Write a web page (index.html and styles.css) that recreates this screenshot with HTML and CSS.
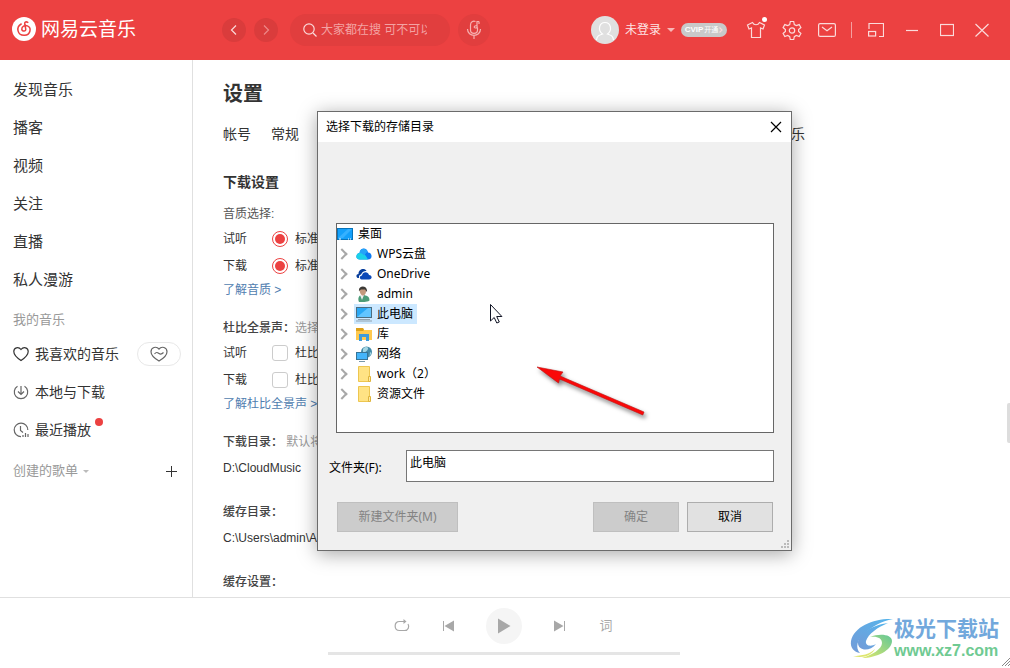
FILE: index.html
```html
<!DOCTYPE html>
<html lang="zh-CN">
<head>
<meta charset="utf-8">
<title>网易云音乐</title>
<link rel="stylesheet" href="styles.css">
</head>
<body>
<header class="topbar">
  <div class="brand">
    <svg class="brand-mark" viewBox="0 0 24 24" width="24" height="24"><circle cx="12" cy="12" r="12" fill="#fff"/><path d="M15.800 5.400c-1.500-1-3.200-.5-3.100 1.200l1 5.200c.6 2.800-3.800 3-3.900.3-.1-2.800 3-4.100 5.600-3.200 4.200 1.500 3.500 8.900-2.800 9.400-7.500.4-8.800-8.400-3.400-11.300" fill="none" stroke="#ec4141" stroke-width="1.500" stroke-linecap="round"/></svg>
    <span class="brand-name">网易云音乐</span>
  </div>
  <div class="history">
    <button class="round" aria-label="后退"><svg viewBox="0 0 24 24" width="24" height="24"><path d="M14 7.500l-4.500 4.500 4.500 4.500"/></svg></button>
    <button class="round dim" aria-label="前进"><svg viewBox="0 0 24 24" width="24" height="24"><path d="M10 7.500l4.500 4.500-4.500 4.500"/></svg></button>
  </div>
  <label class="search">
    <svg viewBox="0 0 14 14" width="14" height="14"><circle cx="6" cy="6" r="5.200"/><path d="M10 10l3.500 3.500"/></svg>
    <input type="text" placeholder="大家都在搜 可不可以" aria-label="搜索">
  </label>
  <button class="round mic" aria-label="听歌识曲"><svg viewBox="0 0 16 20" width="16" height="20"><path d="M9.500 1.500C7 .5 4.500 2 4.500 5v5c0 4.500 7 4.500 7 0V7.500M13 1.500h-2v4.500c-2.500-1-4 2-1.500 2s1.500-2 1.500-2M13 1.500V4M1.500 9c0 8.500 13 8.500 13 0M8 15.500v3.500"/></svg></button>
  <div class="account">
    <svg viewBox="0 0 28 28" width="28" height="28"><circle cx="14" cy="14" r="14" fill="#e0e0e0"/><path d="M5.500 24c.5-4.500 3-5 6-6-5-3.500-3.500-11.500 2.500-11.500s7.500 8 2.500 11.500c3 1 5.500 1.500 6 6" fill="none" stroke="#fff" stroke-width="1.200"/></svg>
    <button class="login">未登录<span class="caret"></span></button>
    <button class="vip"><b>CVIP</b><span>开通</span><svg viewBox="0 0 4 8" width="4" height="8"><path d="M.5 1.500l2.500 2.500-2.500 2.500"/></svg></button>
  </div>
  <div class="tools">
    <button class="skin" aria-label="皮肤"><svg viewBox="0 0 20 18" width="20" height="18"><path d="M6.500 1.500L1.500 4l1.500 4 2.500-1v9.500h9V7l2.500 1 1.500-4-5-2.500c-1.500 3-5.500 3-7 0z"/></svg></button>
    <button aria-label="设置"><svg viewBox="0 0 20 20" width="20" height="20"><path d="M8.300 1.500h3.400l.6 3 2 1.100 2.900-1 1.700 2.900-2.300 2v2l2.300 2-1.700 3-2.900-1-2 1.100-.6 2.900H8.300l-.6-2.900-2-1.100-2.900 1-1.700-3 2.300-2v-2l-2.300-2 1.700-2.900 2.900 1 2-1.100z"/><circle cx="10" cy="10.500" r="2.700"/></svg></button>
    <button aria-label="消息"><svg viewBox="0 0 18 14" width="18" height="14"><rect x=".6" y=".6" width="16.800" height="12.800" rx="1.500"/><path d="M4 4l5 3.800L14 4"/></svg></button>
    <span class="rule"></span>
    <button aria-label="迷你模式"><svg viewBox="0 0 16 14" width="16" height="14"><path d="M1 6V.5h14.500v13H11"/><rect x=".6" y="8.500" width="7" height="4.500"/></svg></button>
    <button class="win" aria-label="最小化"><svg viewBox="0 0 14 14" width="14" height="14"><path d="M1 7.500h12"/></svg></button>
    <button class="win" aria-label="最大化"><svg viewBox="0 0 14 14" width="14" height="14"><rect x=".5" y="1.500" width="13" height="11"/></svg></button>
    <button class="win" aria-label="关闭"><svg viewBox="0 0 14 14" width="14" height="14"><path d="M.5 1l13 12.500M13.500 1l-13 12.500"/></svg></button>
  </div>
</header>

<div class="body">
  <nav class="sidebar">
    <a href="#">发现音乐</a>
    <a href="#">播客</a>
    <a href="#">视频</a>
    <a href="#">关注</a>
    <a href="#">直播</a>
    <a href="#">私人漫游</a>
    <div class="group">我的音乐</div>
    <div class="mine">
      <a href="#"><svg viewBox="0 0 16 16" width="16" height="16"><path d="M8 14.500C5 12.500.8 9.500.8 5.500.8 1.500 5.500.3 8 3.500c2.500-3.200 7.200-2 7.200 2 0 4-4.200 7-7.200 9z"/></svg>我喜欢的音乐</a>
      <button class="heart-mode" aria-label="心动模式"><svg viewBox="0 0 18 16" width="18" height="16"><path d="M9 15C5.500 13 1 9.800 1 5.800 1 1.300 6.300-.2 9 3c2.700-3.200 8-1.700 8 2.800 0 4-4.500 7.200-8 9.200zM4.500 8c2-2.500 3-1.500 4.500-.5s2.500 1 4.500-1"/></svg></button>
    </div>
    <div class="mine"><a href="#"><svg class="soft" viewBox="0 0 16 16" width="16" height="16"><path d="M4.500 2.300a6.700 6.700 0 1 0 7 0M8 2v8M5 7.500l3 3 3-3"/></svg>本地与下载</a></div>
    <div class="mine"><a href="#"><svg class="soft" viewBox="0 0 16 16" width="16" height="16"><path d="M8 14.700A6.800 6.800 0 1 1 14.800 8M7.500 4v4.500L10 10.500M10 15v-2M12.500 15v-4M15 15v-3"/></svg>最近播放<i class="dot"></i></a></div>
    <div class="created"><button class="fold">创建的歌单<span class="caret"></span></button><button class="add" aria-label="新建歌单"><svg viewBox="0 0 11 11" width="11" height="11"><path d="M5.500 0v11M0 5.500h11"/></svg></button></div>
  </nav>

  <main class="settings">
    <h1>设置</h1>
    <div class="tabs"><a href="#">帐号</a><a href="#">常规</a><a href="#">乐</a></div>
    <h2>下载设置</h2>
    <section>
      <h3 class="plain">音质选择:</h3>
      <div class="option"><span>试听</span><label><input type="radio" name="listen" checked>标准</label></div>
      <div class="option"><span>下载</span><label><input type="radio" name="save" checked>标准</label></div>
      <a class="more" href="#">了解音质 &gt;</a>
    </section>
    <section>
      <h3>杜比全景声：<small>选择</small></h3>
      <div class="option"><span>试听</span><label><input type="checkbox">杜比</label></div>
      <div class="option"><span>下载</span><label><input type="checkbox">杜比</label></div>
      <a class="more" href="#">了解杜比全景声 &gt;</a>
    </section>
    <section>
      <h3>下载目录： <small>默认将</small></h3>
      <p class="path">D:\CloudMusic</p>
    </section>
    <section>
      <h3>缓存目录：</h3>
      <p class="path">C:\Users\admin\A</p>
    </section>
    <section>
      <h3>缓存设置：</h3>
    </section>
    <span class="thumb"></span>
  </main>
</div>

<footer class="player">
  <div class="controls">
    <button aria-label="循环"><svg viewBox="0 0 16 14" width="16" height="14"><path class="line" d="M10 2.500H5.500C-.3 2.500-.3 11.500 5.500 11.500h5c4 0 5-4 3.500-6.500"/><path d="M9.500 0l3 2.500-3 2.500z"/></svg></button>
    <button aria-label="上一首"><svg viewBox="0 0 16 14" width="16" height="14"><path d="M3 2h1v10H3zM14 1.500v11L4.500 7z"/></svg></button>
    <button class="play" aria-label="播放"><svg viewBox="0 0 14 16" width="14" height="16"><path d="M1 .5v15L13.500 8z"/></svg></button>
    <button aria-label="下一首"><svg viewBox="0 0 16 14" width="16" height="14"><path d="M12 2h1v10h-1zM2 1.500v11L11.500 7z"/></svg></button>
    <button class="lyric">词</button>
  </div>
  <div class="progress"></div>
</footer>

<div class="watermark">
  <svg viewBox="0 0 44 42" width="44" height="42">
    <defs><linearGradient id="sky" x1="1" y1="0" x2="0" y2="1"><stop offset="0" stop-color="#55b5ec"/><stop offset="1" stop-color="#739bd8"/></linearGradient><linearGradient id="leaf" x1="1" y1="0" x2="0" y2="1"><stop offset="0" stop-color="#61c797"/><stop offset="1" stop-color="#e3e86a"/></linearGradient></defs>
    <path fill="url(#sky)" d="M43 1C25 0 4 8 1 23c-1 7 3 11 9 12-5-5-3-14 5-20C22 9 31 3 43 1z"/>
    <path fill="url(#sky)" d="M38 5C22 7 8 16 8 25c0 8 12 9 18 1-5 3-11 2-10-3 2-7 12-14 22-18z"/>
    <path fill="url(#leaf)" d="M20 19c9-4 22-3 22 4 0 9-15 17-30 17 10-3 20-9 20-15 0-5-5-7-12-6z"/>
    <path fill="#dfe66d" d="M3 38c9 0 17-2 22-7-3 6-12 10-22 7z"/>
  </svg>
  <div class="site"><strong>极光下载站</strong><span>www.xz7.com</span></div>
</div>
<svg class="window-grip" viewBox="0 0 8 8" width="8" height="8"><path d="M0 8L8 0M3 8l5-5M6 8l2-2"/></svg>

<div class="dialog" role="dialog" aria-labelledby="dialog-title">
  <div class="titlebar"><span id="dialog-title">选择下载的存储目录</span><button aria-label="关闭"><svg viewBox="0 0 12 12" width="12" height="12"><path d="M1 1l10 10M11 1L1 11"/></svg></button></div>
  <div class="content">
    <ul class="tree">
      <li class="root"><svg viewBox="0 0 16 12" width="16" height="12"><rect x=".5" y=".5" width="15" height="11" fill="#14a0fa" stroke="#0873b8"/><path d="M1 10L11 1h4L6 10z" fill="#36b1ff"/><path d="M2 11h2m7 0h1m1 0h1" stroke="#fff"/></svg><span>桌面</span></li>
      <li><button class="expand" aria-label="展开"></button><svg viewBox="0 0 16 16" width="16" height="16"><path d="M4 13.500c-5 0-4.500-6-.5-6.500C4 1.500 11 1 12 6.500c4.500 0 5 7 0 7z" fill="#0c7bf2"/><path d="M4 13.500c-5 0-4.500-6-.5-6.500 4-1 6 2 8.500 6.500z" fill="#1bd1e8"/><path d="M3.500 7C4 2 10 1.500 11.500 5.500L8 9.500C7 8 5.500 7 3.500 7z" fill="#24a4f8"/></svg><span>WPS云盘</span></li>
      <li><button class="expand" aria-label="展开"></button><svg viewBox="0 0 16 16" width="16" height="16"><path d="M1.500 12C-.5 10.500.5 8 2.500 8c0-5 6-6.500 8-3C6.500 4.500 5.500 8 5 8.500 2.500 9 3 11 3 12z" fill="#083e9c"/><path d="M5.500 13.500c-2.500-.5-2-4 .5-4 .5-4 6-4.500 7-.5 3.500 0 3.500 4.500 0 4.500z" fill="#0b48b8"/></svg><span>OneDrive</span></li>
      <li><button class="expand" aria-label="展开"></button><svg viewBox="0 0 16 16" width="16" height="16"><path d="M3 16c-1-2-1-5 1-6.500l4-.5c4 1 5.500 2 5.500 5.500-3 2-7 1.500-10.500 1.500z" fill="#4c9c78"/><path d="M4 9l2 5 2-5z" fill="#eee"/><path d="M3.500 3h6.500c.5 4-1 6.500-3 6.500S3.500 7 3.500 3z" fill="#c49a7d"/><path d="M3 5C2-1 12-1 11 6L9 3.500H5z" fill="#3c3936"/></svg><span>admin</span></li>
      <li class="selected"><button class="expand" aria-label="展开"></button><svg viewBox="0 0 16 16" width="16" height="16"><rect x=".5" y="1.500" width="15" height="10" fill="#29a8f5" stroke="#4d6d80"/><path d="M1 11L12 2h3v9z" fill="#62c5ff"/><path d="M2 13.500h12M0 15h16" stroke="#91a2ae"/></svg><span>此电脑</span></li>
      <li><button class="expand" aria-label="展开"></button><svg viewBox="0 0 16 16" width="16" height="16"><path d="M0 2h7l1 2h8v10H0z" fill="#ffc94f"/><path d="M0 2h7l1 2-1 1H0z" fill="#dda119"/><path d="M3 15V8h10v7h-3v-4H6v4z" fill="#3e9bdc"/></svg><span>库</span></li>
      <li><button class="expand" aria-label="展开"></button><svg viewBox="0 0 16 16" width="16" height="16"><circle cx="10.500" cy="6" r="5.500" fill="#438ba9"/><path d="M7 3c2-3 6-2 5 0s-3 4-5 3zm7 3l1.500 1-2 3.500z" fill="#a4d6e4"/><rect x=".5" y="6.500" width="11" height="7" fill="#44b5fa" stroke="#367598"/><path d="M3 15.500h6" stroke="#7897a8"/></svg><span>网络</span></li>
      <li><button class="expand" aria-label="展开"></button><svg viewBox="0 0 16 16" width="16" height="16"><path d="M2.500.5h11v15h-11z" fill="#ffe384" stroke="#edc650"/><path d="M12.500 15.500v-5h2v5z" fill="#ffeaa1" stroke="#dfb53d"/></svg><span>work（2）</span></li>
      <li><button class="expand" aria-label="展开"></button><svg viewBox="0 0 16 16" width="16" height="16"><path d="M2.500.5h11v15h-11z" fill="#ffe384" stroke="#edc650"/><path d="M12.500 15.500v-5h2v5z" fill="#ffeaa1" stroke="#dfb53d"/></svg><span>资源文件</span></li>
    </ul>
    <div class="field"><label for="folder">文件夹(F):</label><input id="folder" type="text" value="此电脑"></div>
    <div class="actions"><button class="wide" disabled>新建文件夹(M)</button><button disabled>确定</button><button>取消</button></div>
  </div>
  <svg class="grip" viewBox="0 0 9 9" width="9" height="9"><path d="M6 0h2v2H6zM3 3h2v2H3zM6 3h2v2H6zM0 6h2v2H0zM3 6h2v2H3zM6 6h2v2H6z"/></svg>
  <svg class="cursor" viewBox="0 0 13 20" width="13" height="20"><path d="M.5.500v16.500l3.700-3.500 2.600 5.500 2.500-1-2.600-5.500h5.200z" fill="#fff" stroke="#111425"/></svg>
  <svg class="pointer" viewBox="0 0 124 64" width="124" height="64"><path d="M3 3l26 5-3 4 84 36-1.200 3L25.500 15 24.500 19z" fill="#fa0909" stroke="#c01010" stroke-width=".6"/></svg>
</div>
</body>
</html>
```

FILE: styles.css
```css
* { box-sizing: border-box; }
body {
  margin: 0;
  height: 100vh;
  display: flex;
  flex-direction: column;
  position: relative;
  overflow: hidden;
  background: #fff;
  color: #333;
  font: 12px/20px "Liberation Sans", "Noto Sans CJK SC", sans-serif;
}
button { border: 0; padding: 0; background: none; color: inherit; font: inherit; }
a { color: inherit; text-decoration: none; }
svg { display: block; flex: none; }
h1, h2, h3, p, ul { margin: 0; padding: 0; }

/* top bar */
.topbar {
  flex: none;
  height: 60px;
  display: flex;
  align-items: center;
  padding: 0 21px 0 12px;
  background: #ec4141;
  color: #fde4e4;
}
.brand { display: flex; align-items: center; gap: 5px; width: 210px; color: #fff; }
.brand-mark { margin-top: -2px; }
.brand-name { font-size: 19px; line-height: 24px; }
.history { display: flex; gap: 8px; margin-right: 12px; }
.round { width: 24px; height: 24px; border-radius: 50%; background: #da3c3c; }
.round svg, .search svg, .tools svg, .vip svg { fill: none; stroke: #fbdada; stroke-width: 1.2; }
.round.dim svg { stroke: #ed8888; }
.search {
  display: flex;
  align-items: center;
  gap: 4px;
  width: 160px;
  height: 32px;
  padding: 0 23px 0 13px;
  margin-right: 8px;
  border-radius: 16px;
  background: #e13e3e;
}
.search input {
  min-width: 0;
  flex: 1;
  border: 0;
  padding: 0;
  outline: 0;
  background: none;
  color: #fff;
  font: inherit;
}
.search input::placeholder { color: #f3a3a3; }
.round.mic { display: grid; place-items: center; width: 32px; height: 32px; background: #e13e3e; }
.round.mic svg { stroke: #f6b1b1; }
.account { display: flex; align-items: center; gap: 6px; margin-left: auto; margin-right: 19px; }
.caret { border: 4px solid transparent; border-top-color: currentColor; border-bottom: 0; }
.login { display: flex; align-items: center; gap: 6px; }
.login .caret { color: #f8b7b7; }
.vip {
  display: flex;
  align-items: center;
  justify-content: center;
  gap: 1px;
  width: 46px;
  height: 14px;
  border-radius: 7px;
  background: #c9c9c9;
  color: #fff;
  font-size: 7px;
  line-height: 14px;
}
.vip b { font-size: 8px; }
.tools { display: flex; align-items: center; gap: 16px; }
.tools button { display: grid; place-items: center; min-width: 14px; }
.tools .rule { width: 1px; height: 16px; margin-left: -1px; background: #f4a0a0; }
.tools .win { margin-left: 5px; }
.skin { position: relative; }
.skin::after {
  content: "";
  position: absolute;
  right: -1px;
  top: -4px;
  width: 5px;
  height: 5px;
  border-radius: 50%;
  background: #fff;
}

/* side navigation */
.body { flex: 1; min-height: 0; display: flex; }
.sidebar { flex: none; width: 193px; padding-top: 11px; border-right: 1px solid #e0e0e0; }
.sidebar > a { display: block; padding-left: 13px; font-size: 15px; line-height: 38px; }
.group { padding: 6px 0 0 13px; color: #999; font-size: 13px; line-height: 30px; }
.mine { display: flex; align-items: center; justify-content: space-between; height: 38px; padding: 0 11px 0 13px; }
.mine a { display: flex; align-items: center; gap: 6px; font-size: 14px; }
.mine svg, .add svg { fill: none; stroke: #333; stroke-width: 1.2; }
.add svg { stroke-width: 1; }
.mine svg.soft { stroke: #666; }
.dot { width: 8px; height: 8px; margin: -16px 0 0 -2px; border-radius: 50%; background: #ec4141; }
.heart-mode { display: grid; place-items: center; width: 44px; height: 24px; border: 1px solid #e8e8e8; border-radius: 12px; }
.mine .heart-mode svg { stroke: #666; }
.created { display: flex; align-items: center; justify-content: space-between; height: 44px; padding: 0 15px 0 13px; }
.fold { display: flex; align-items: center; gap: 5px; color: #999; font-size: 13px; }
.fold .caret { border-width: 3px; border-bottom: 0; color: #bbb; }

/* settings page */
.settings { flex: 1; min-width: 0; position: relative; overflow: hidden; padding: 18px 30px 0; }
.settings h1 { font-size: 20px; line-height: 32px; }
.tabs { display: flex; gap: 20px; max-width: 582px; margin-top: 8px; font-size: 14px; line-height: 32px; white-space: nowrap; }
.tabs a:last-child { margin-left: auto; }
.settings h2 { margin-top: 20px; font-size: 14px; line-height: 24px; }
.settings section { margin-top: 16px; }
.settings h2 + section { margin-top: 9px; }
.settings h3 { color: #444; font-size: 12px; font-weight: 500; line-height: 22px; }
.settings h3.plain { color: #555; font-weight: 400; }
.settings small { color: #999; font-size: 12px; font-weight: 400; }
.option { display: flex; align-items: center; height: 27px; }
.option span { width: 49px; }
.option label { display: flex; align-items: center; gap: 7px; }
.option input { appearance: none; flex: none; width: 16px; height: 16px; margin: 0; border: 1px solid #ccc; border-radius: 3px; background: #fff; }
.option input[type="radio"] { border-color: #ec4141; border-radius: 50%; }
.option input[type="radio"]:checked { background: #ec4141; background-clip: content-box; padding: 2px; }
.more { display: block; color: #507daf; line-height: 22px; }
.path { line-height: 30px; padding-bottom: 2px; }
.thumb { position: absolute; right: 0; top: 343px; width: 3px; height: 40px; border-radius: 2px 0 0 2px; background: #ddd; }

/* player */
.player { flex: none; height: 71px; padding: 10px 2px 0 0; border-top: 1px solid #e0e0e0; display: flex; flex-direction: column; align-items: center; gap: 8px; }
.controls { display: flex; align-items: center; gap: 30px; color: #a8a8a8; }
.controls button { display: grid; place-items: center; min-width: 16px; }
.controls svg { fill: #a8a8a8; }
.controls .line { fill: none; stroke: #a8a8a8; stroke-width: 1.2; }
.controls .play { width: 36px; height: 36px; border-radius: 50%; background: #f5f5f5; }
.lyric { font-size: 13px; }
.progress { width: 352px; height: 3px; background: #e5e5e5; }

.watermark { position: absolute; right: 11px; bottom: 7px; display: flex; align-items: center; }
.site { display: flex; flex-direction: column; }
.site strong { color: #72a8dc; font-size: 21px; line-height: 24px; }
.site span { color: #6fca92; font-size: 16px; font-weight: 700; line-height: 20px; }
.window-grip { position: absolute; right: 0; bottom: 2px; fill: none; stroke: #888; }

/* folder dialog */
.dialog {
  position: absolute;
  left: 317px;
  top: 111px;
  width: 475px;
  border: 1px solid #6b6b6b;
  background: #f0f0f0;
  color: #000;
  font-family: "Noto Sans", "Noto Sans CJK SC", sans-serif;
  box-shadow: 0 3px 18px rgba(0, 0, 0, .35);
}
.titlebar { display: flex; align-items: center; justify-content: space-between; height: 30px; padding: 0 9px 0 8px; background: #fff; }
.titlebar svg { fill: none; stroke: #000; stroke-width: 1.2; }
.content { padding: 81px 17px 18px 18px; }
.tree { list-style: none; height: 210px; border: 1px solid #666; background: #fff; }
.tree li { display: flex; align-items: center; height: 20px; }
.tree li.root { gap: 3px; }
.tree li > svg { margin-left: 9px; }
.tree li.root > svg { margin-left: 0; }
.tree li > span { padding: 0 4px 0 5px; }
.tree li.root > span { padding: 0 2px; }
.selected { background: linear-gradient(#cce8ff, #cce8ff) 17px 0 / 63px 20px no-repeat; }
.expand { width: 10px; height: 10px; display: grid; place-items: center; }
.expand::before { content: ""; width: 6px; height: 6px; border: solid #a8a8a8; border-width: 2px 2px 0 0; transform: rotate(45deg); }
.field { display: flex; align-items: center; margin: 17px 0 20px -7px; }
.field label { width: 77px; padding-top: 3px; }
.field input { flex: 1; min-width: 0; height: 32px; border: 1px solid #767676; padding: 0 3px 8px; background: #fff; color: #000; font: inherit; }
.actions { display: flex; gap: 8px; padding: 0 1px; }
.actions button { width: 86px; height: 30px; border: 1px solid #adadad; background: #e1e1e1; }
.actions .wide { width: 121px; margin-right: auto; }
.actions button:disabled { border-color: #bfbfbf; background: #ccc; color: #838383; }
.grip { position: absolute; right: 1px; bottom: 1px; fill: #bbb; }
.cursor { position: absolute; left: 172px; top: 192px; }
.pointer { position: absolute; left: 216px; top: 252px; filter: drop-shadow(2px 3px 2px rgba(0, 0, 0, .5)); }
```
